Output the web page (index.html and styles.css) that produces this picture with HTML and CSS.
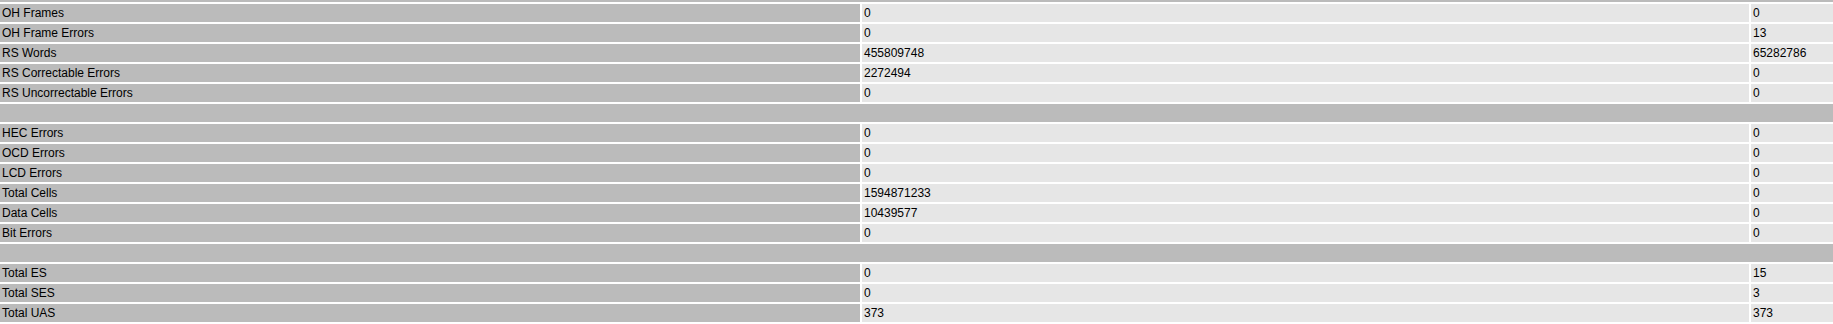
FILE: index.html
```html
<!DOCTYPE html>
<html>
<head>
<meta charset="utf-8">
<title>Statistics</title>
<link rel="stylesheet" href="styles.css">
</head>
<body>
<table class="stats">
<colgroup><col class="c-label"><col class="c-val"><col class="c-val2"></colgroup>
<tbody>
<tr class="sep"><td colspan="3"></td></tr>
<tr><td class="lbl">OH Frames</td><td class="val">0</td><td class="val">0</td></tr>
<tr><td class="lbl">OH Frame Errors</td><td class="val">0</td><td class="val">13</td></tr>
<tr><td class="lbl">RS Words</td><td class="val">455809748</td><td class="val">65282786</td></tr>
<tr><td class="lbl">RS Correctable Errors</td><td class="val">2272494</td><td class="val">0</td></tr>
<tr><td class="lbl">RS Uncorrectable Errors</td><td class="val">0</td><td class="val">0</td></tr>
<tr class="sep"><td colspan="3"></td></tr>
<tr><td class="lbl">HEC Errors</td><td class="val">0</td><td class="val">0</td></tr>
<tr><td class="lbl">OCD Errors</td><td class="val">0</td><td class="val">0</td></tr>
<tr><td class="lbl">LCD Errors</td><td class="val">0</td><td class="val">0</td></tr>
<tr><td class="lbl">Total Cells</td><td class="val">1594871233</td><td class="val">0</td></tr>
<tr><td class="lbl">Data Cells</td><td class="val">10439577</td><td class="val">0</td></tr>
<tr><td class="lbl">Bit Errors</td><td class="val">0</td><td class="val">0</td></tr>
<tr class="sep"><td colspan="3"></td></tr>
<tr><td class="lbl">Total ES</td><td class="val">0</td><td class="val">15</td></tr>
<tr><td class="lbl">Total SES</td><td class="val">0</td><td class="val">3</td></tr>
<tr><td class="lbl">Total UAS</td><td class="val">373</td><td class="val">373</td></tr>
</tbody>
</table>
</body>
</html>
```
FILE: styles.css
```css
html, body {
  margin: 0;
  padding: 0;
  background: #ffffff;
  overflow: hidden;
}

.stats {
  border-collapse: separate;
  border-spacing: 2px;
  table-layout: fixed;
  width: 1837px;
  margin: -18px 0 0 -2px;
  font-family: "Liberation Sans", Arial, sans-serif;
  font-size: 12px;
  color: #000000;
}

.c-label { width: 860px; }
.c-val { width: 887px; }
.c-val2 { width: 82px; }

.stats td {
  height: 18px;
  padding: 0 2px;
  line-height: 18px;
  white-space: nowrap;
  overflow: hidden;
  vertical-align: middle;
}

.stats td.lbl {
  background: #bbbbbb;
}

.stats td.val {
  background: #e6e6e6;
}

.stats tr.sep td {
  background: #bbbbbb;
}
```
